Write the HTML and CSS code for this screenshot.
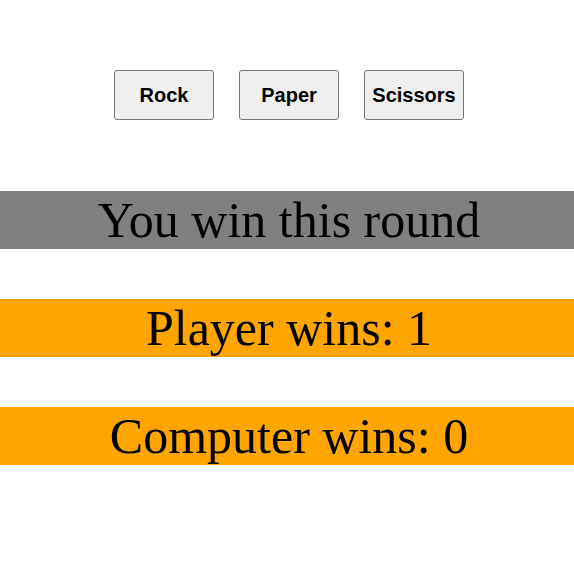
FILE: index.html
```html
<!DOCTYPE html>
<html lang="en">
<head>
<meta charset="utf-8">
<meta name="viewport" content="width=device-width, initial-scale=1">
<title>Rock Paper Scissors</title>
<link rel="stylesheet" href="styles.css">
</head>
<body>
<main class="game">
  <div class="choices">
    <button type="button" class="choice">Rock</button>
    <button type="button" class="choice">Paper</button>
    <button type="button" class="choice">Scissors</button>
  </div>
  <div class="banner result">You win this round</div>
  <div class="banner score">Player wins: 1</div>
  <div class="banner score">Computer wins: 0</div>
</main>
</body>
</html>
```

FILE: styles.css
```css
body {
  margin: 0;
  background: #fff;
  color: #000;
  font-family: "Liberation Serif", serif;
}

.game {
  display: flex;
  flex-direction: column;
  gap: 50px;
  padding-top: 70px;
}

.choices {
  display: flex;
  justify-content: center;
  gap: 25px;
  padding-left: 4px;
  margin-bottom: 21px;
}

.choice {
  width: 100px;
  height: 50px;
  padding: 0;
  border: 1px solid #767676;
  border-radius: 3px;
  background: #efefef;
  color: #000;
  font: bold 20px "Liberation Sans", sans-serif;
}

.banner {
  padding-left: 4px;
  font-size: 50px;
  line-height: 58px;
  text-align: center;
}

.result {
  background: gray;
}

.score {
  background: orange;
}
```
